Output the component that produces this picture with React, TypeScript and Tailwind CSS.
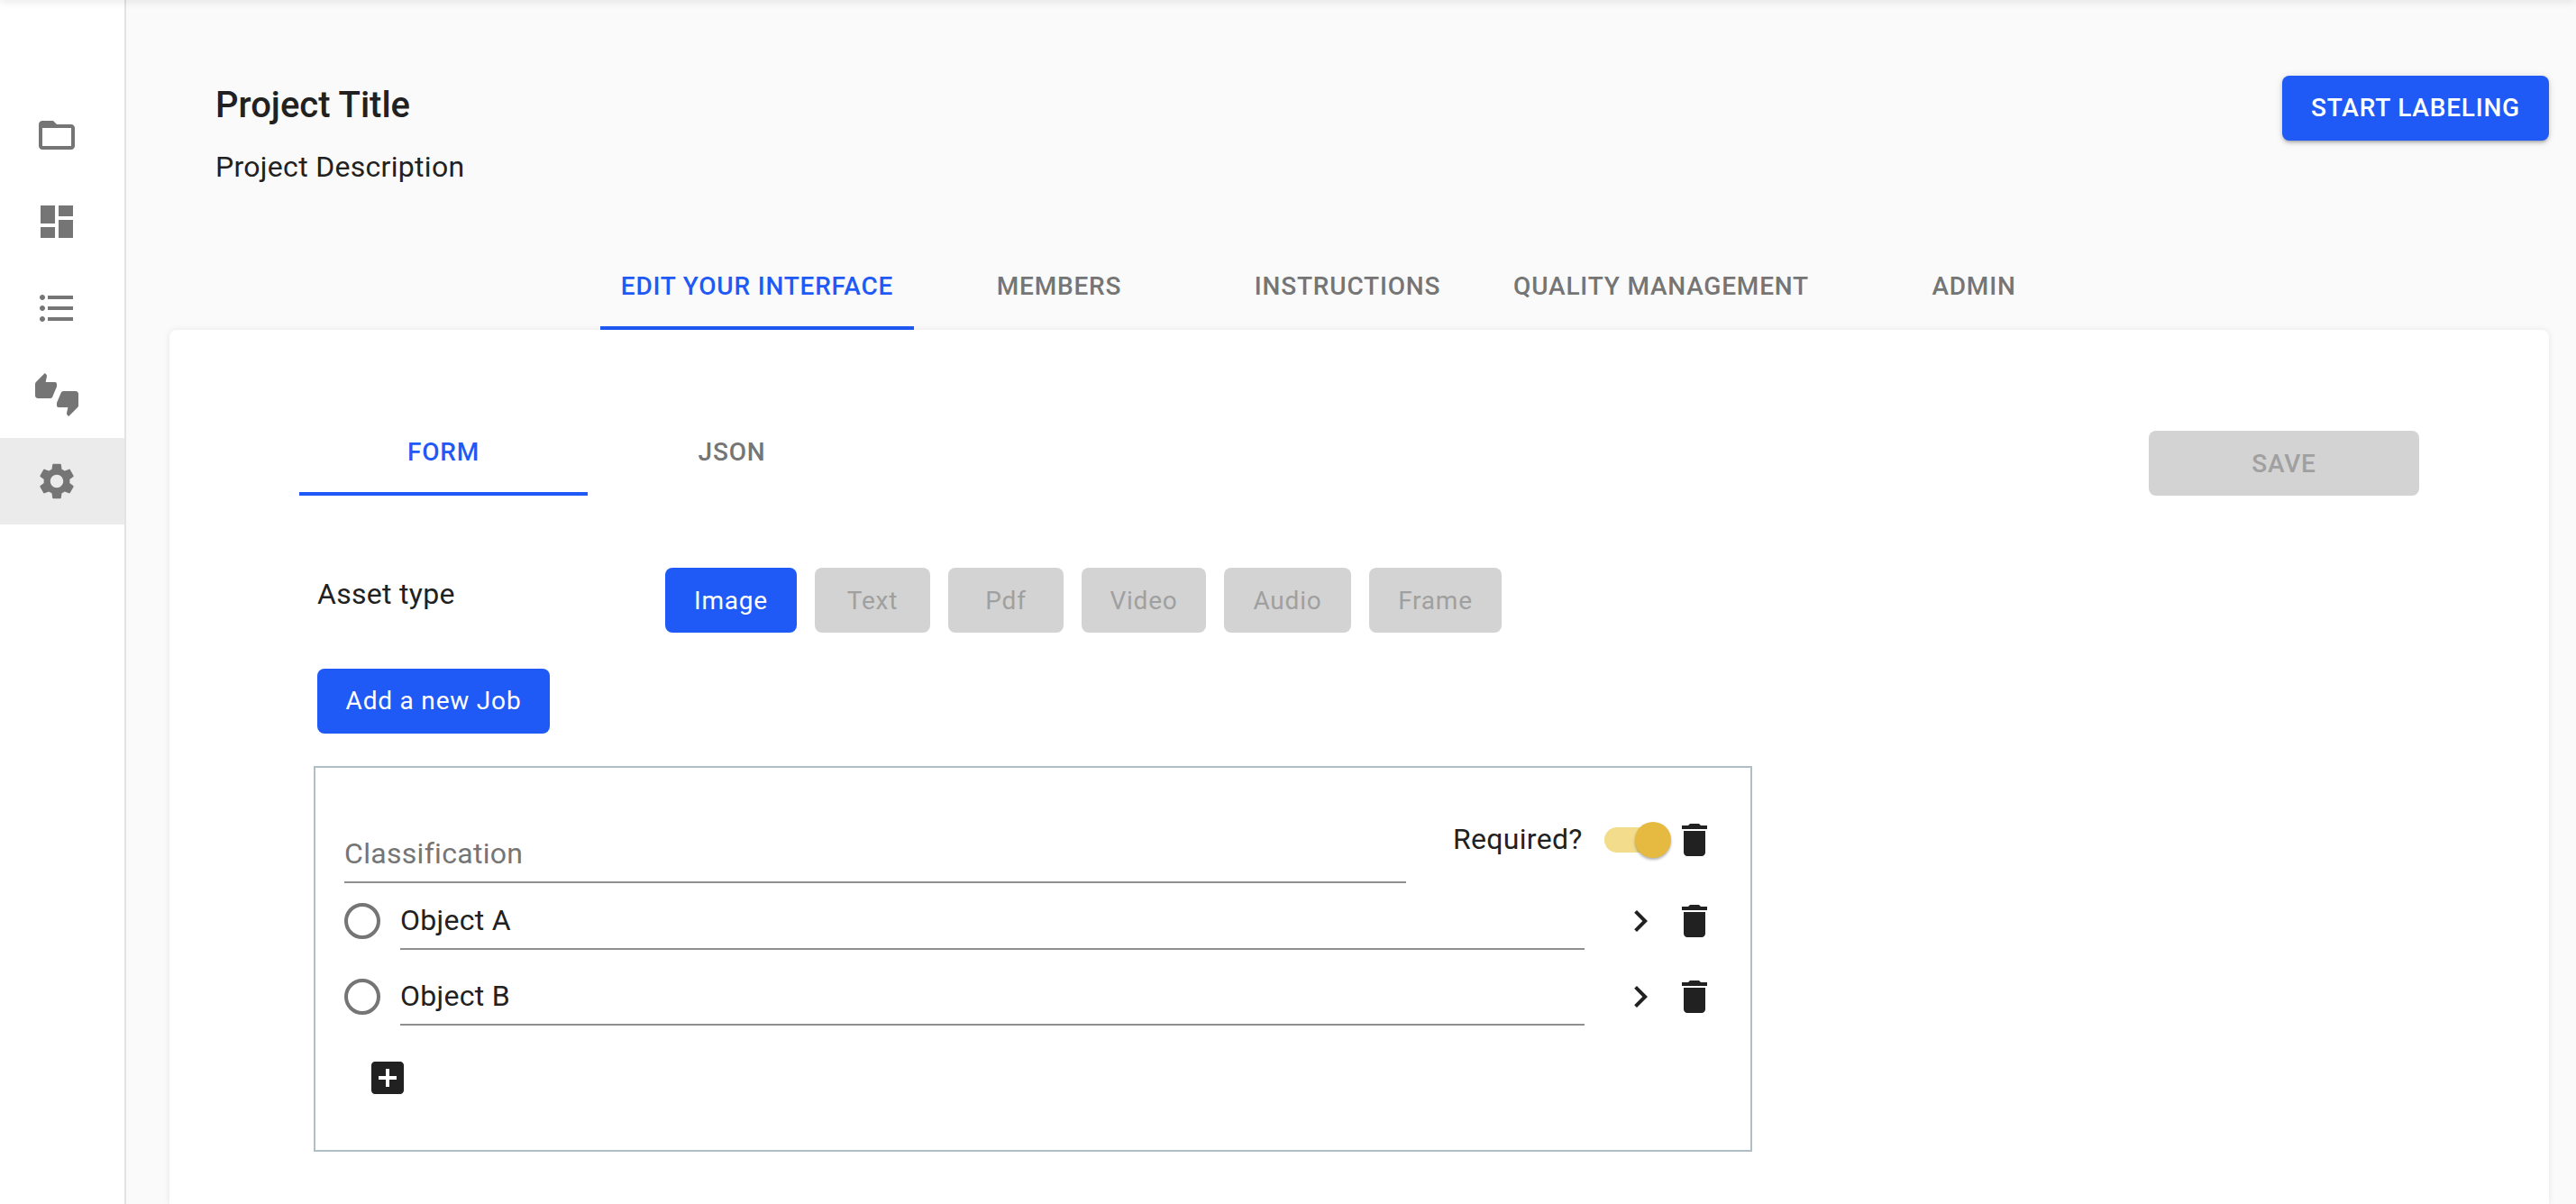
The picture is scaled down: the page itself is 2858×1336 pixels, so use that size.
const FOLDER = "M20 6h-8l-2-2H4c-1.1 0-1.99.9-1.99 2L2 18c0 1.1.9 2 2 2h16c1.1 0 2-.9 2-2V8c0-1.1-.9-2-2-2zm0 12H4V8h16v10z";
const DASH = "M3 13h8V3H3v10zm0 8h8v-6H3v6zm10 0h8V11h-8v10zm0-18v6h8V3h-8z";
const LIST = "M4 10.5c-.83 0-1.5.67-1.5 1.5s.67 1.5 1.5 1.5 1.5-.67 1.5-1.5-.67-1.5-1.5-1.5zm0-6c-.83 0-1.5.67-1.5 1.5S3.17 7.5 4 7.5 5.5 6.83 5.5 6 4.83 4.5 4 4.5zm0 12c-.83 0-1.5.68-1.5 1.5s.68 1.5 1.5 1.5 1.5-.68 1.5-1.5-.67-1.5-1.5-1.5zM7 19h14v-2H7v2zm0-6h14v-2H7v2zm0-8v2h14V5H7z";
const THUMBS = "M12 6c0-.55-.45-1-1-1H5.82l.66-3.18.02-.23c0-.31-.13-.59-.33-.8L5.38 0 .44 4.94C.17 5.21 0 5.59 0 6v6.5c0 .83.67 1.5 1.5 1.5h6.75c.62 0 1.15-.38 1.38-.91l2.26-5.29c.07-.17.11-.36.11-.55V6zm10.5 4h-6.75c-.62 0-1.15.38-1.38.91l-2.26 5.29c-.07.17-.11.36-.11.55V18c0 .55.45 1 1 1h5.18l-.66 3.18-.02.24c0 .31.13.59.33.8l.79.78 4.94-4.94c.27-.27.44-.65.44-1.06v-6.5c0-.83-.67-1.5-1.5-1.5z";
const GEAR = "M19.14 12.94c.04-.3.06-.61.06-.94 0-.32-.02-.64-.07-.94l2.03-1.58c.18-.14.23-.41.12-.61l-1.92-3.32c-.12-.22-.37-.29-.59-.22l-2.39.96c-.5-.38-1.03-.7-1.62-.94l-.36-2.54c-.04-.24-.24-.41-.48-.41h-3.84c-.24 0-.43.17-.47.41l-.36 2.54c-.59.24-1.13.57-1.62.94l-2.39-.96c-.22-.08-.47 0-.59.22L2.74 8.87c-.12.21-.08.47.12.61l2.03 1.58c-.05.3-.09.63-.09.94s.02.64.07.94l-2.03 1.58c-.18.14-.23.41-.12.61l1.92 3.32c.12.22.37.29.59.22l2.39-.96c.5.38 1.03.7 1.62.94l.36 2.54c.05.24.24.41.48.41h3.84c.24 0 .44-.17.47-.41l.36-2.54c.59-.24 1.13-.56 1.62-.94l2.39.96c.22.08.47 0 .59-.22l1.92-3.32c.12-.22.07-.47-.12-.61l-2.01-1.58zM12 15.6c-1.98 0-3.6-1.62-3.6-3.6s1.62-3.6 3.6-3.6 3.6 1.62 3.6 3.6-1.62 3.6-3.6 3.6z";
const TRASH = "M6 19c0 1.1.9 2 2 2h8c1.1 0 2-.9 2-2V7H6v12zM19 4h-3.5l-1-1h-5l-1 1H5v2h14V4z";
const CHEVRON = "M10 6L8.59 7.41 13.17 12l-4.58 4.59L10 18l6-6z";
const ADDBOX = "M19 3H5c-1.11 0-2 .9-2 2v14c0 1.1.89 2 2 2h14c1.1 0 2-.9 2-2V5c0-1.1-.9-2-2-2zm-2 10h-4v4h-2v-4H7v-2h4V7h2v4h4v2z";

function Icon({ d, className }: { d: string; className: string }) {
  return (
    <svg viewBox="0 0 24 24" fill="currentColor" className={"w-[48px] h-[48px] shrink-0 " + className}>
      <path d={d} />
    </svg>
  );
}

function OptionRow({ label, className }: { label: string; className: string }) {
  return (
    <div className={"flex items-start " + className}>
      <div className="w-[40px] h-[40px] mt-[4px] rounded-full border-[4px] border-[#757575] shrink-0" />
      <div className="ml-[22px] w-[1314px] h-[56px] border-b-2 border-[#8f8f8f] text-[32px] leading-[46px] tracking-[0.3px] text-[#212121]">
        {label}
      </div>
      <Icon d={CHEVRON} className="ml-[38px] text-[#212121]" />
      <Icon d={TRASH} className="ml-[12px] text-[#212121]" />
    </div>
  );
}

export default function App() {
  const sideIcons = [FOLDER, DASH, LIST, THUMBS, GEAR];
  const mainTabs = [
    { label: "EDIT YOUR INTERFACE", w: "w-[348px]", active: true },
    { label: "MEMBERS", w: "w-[320px] pl-[2px]", active: false },
    { label: "INSTRUCTIONS", w: "w-[320px] pl-[2px]", active: false },
    { label: "QUALITY MANAGEMENT", w: "w-[374px] pl-[4px]", active: false },
    { label: "ADMIN", w: "w-[320px] pl-[4px]", active: false },
  ];
  const assets = [
    { label: "Image", w: "w-[146px]", active: true },
    { label: "Text", w: "w-[128px]", active: false },
    { label: "Pdf", w: "w-[128px]", active: false },
    { label: "Video", w: "w-[138px]", active: false },
    { label: "Audio", w: "w-[141px]", active: false },
    { label: "Frame", w: "w-[147px]", active: false },
  ];
  return (
    <div className="relative flex w-[2858px] h-[1336px] overflow-hidden bg-white font-['Roboto',sans-serif]">
      <div className="absolute -top-[8px] left-0 right-0 h-[8px] bg-white shadow-[0_2px_10px_rgba(0,0,0,0.1)] z-10" />
      <aside className="w-[140px] shrink-0 bg-white border-r-2 border-[#e3e3e3] pt-[102px]">
        {sideIcons.map((d, i) => (
          <div key={i} className={"h-[96px] pr-[12px] flex items-center justify-center " + (i === 4 ? "bg-[#ebebeb]" : "")}>
            <Icon d={d} className="text-[#757575]" />
          </div>
        ))}
      </aside>
      <main className="flex-1 bg-[#fafafa] flex flex-col min-w-0">
        <div className="flex justify-between pl-[99px] pr-[30px] pt-[84px] h-[270px]">
          <div>
            <h1 className="text-[40px] leading-[62px] font-medium text-[#212121] mt-[2px]">Project Title</h1>
            <p className="text-[32px] leading-[44px] tracking-[0.3px] text-[#212121] mt-[15px]">Project Description</p>
          </div>
          <button className="w-[296px] h-[72px] rounded-lg bg-[#1f5af6] text-white text-[28px] font-medium tracking-[0.8px] shadow-[0_3px_3px_-2px_rgba(0,0,0,0.2),0_3px_4px_0_rgba(0,0,0,0.14),0_1px_8px_0_rgba(0,0,0,0.12)]">
            START LABELING
          </button>
        </div>
        <div className="flex ml-[526px] h-[96px]">
          {mainTabs.map((t) => (
            <div
              key={t.label}
              className={
                t.w +
                " h-[96px] flex items-center justify-center text-[28px] font-medium tracking-[0.8px] " +
                (t.active ? "text-[#1f5af6] shadow-[inset_0_-4px_0_#1f5af6]" : "text-[#757575]")
              }
            >
              {t.label}
            </div>
          ))}
        </div>
        <section className="flex-1 ml-[48px] mr-[30px] bg-white rounded-t-lg shadow-[0_0_7px_rgba(0,0,0,0.09)] pt-[88px] px-[144px]">
          <div className="flex justify-between items-start">
            <div className="flex">
              <div className="w-[320px] h-[96px] flex items-center justify-center text-[28px] font-medium tracking-[0.8px] text-[#1f5af6] shadow-[inset_0_-4px_0_#1f5af6]">
                FORM
              </div>
              <div className="w-[320px] h-[96px] flex items-center justify-center text-[28px] font-medium tracking-[0.8px] text-[#757575]">
                JSON
              </div>
            </div>
            <button className="w-[300px] h-[72px] mt-[24px] pt-[1px] rounded-lg bg-[#d3d3d3] text-[#a0a0a0] text-[28px] font-medium tracking-[0.8px]">
              SAVE
            </button>
          </div>
          <div className="pl-[16px]">
            <div className="flex items-start mt-[80px] pl-[4px]">
              <div className="w-[386px] text-[32px] leading-[59px] tracking-[0.3px] text-[#212121]">Asset type</div>
              <div className="flex gap-[20px]">
                {assets.map((a) => (
                  <button
                    key={a.label}
                    className={
                      a.w +
                      " h-[72px] pt-[1px] rounded-lg text-[28px] tracking-[0.8px] " +
                      (a.active ? "bg-[#1f5af6] text-white" : "bg-[#d3d3d3] text-[#a0a0a0]")
                    }
                  >
                    {a.label}
                  </button>
                ))}
              </div>
            </div>
            <button className="block ml-[4px] mt-[40px] w-[258px] h-[72px] rounded-lg bg-[#1f5af6] text-white text-[28px] tracking-[0.8px]">
              Add a new Job
            </button>
            <div className="mt-[36px] w-[1596px] h-[428px] border-2 border-[#b0bec5] pl-[32px] pt-[56px]">
              <div className="flex items-start">
                <div className="w-[1178px] h-[72px] border-b-2 border-[#8f8f8f] flex items-end pb-[12px] text-[32px] leading-[38px] tracking-[0.3px] text-[#757575]">
                  Classification
                </div>
                <div className="ml-[52px] h-[48px] flex items-center">
                  <span className="w-[168px] -mt-[2px] text-[32px] tracking-[0.3px] text-[#212121]">Required?</span>
                  <div className="relative w-[74px] h-[40px]">
                    <div className="absolute left-0 top-[6px] w-[68px] h-[28px] rounded-full bg-[#f3dc8c]" />
                    <div className="absolute right-0 top-0 w-[40px] h-[40px] rounded-full bg-[#e6ba40] shadow-[0_2px_3px_rgba(0,0,0,0.3)]" />
                  </div>
                  <Icon d={TRASH} className="ml-[2px] text-[#212121]" />
                </div>
              </div>
              <OptionRow label="Object A" className="mt-[18px]" />
              <OptionRow label="Object B" className="mt-[28px]" />
              <Icon d={ADDBOX} className="block ml-[24px] mt-[34px] text-[#212121]" />
            </div>
          </div>
        </section>
      </main>
    </div>
  );
}
